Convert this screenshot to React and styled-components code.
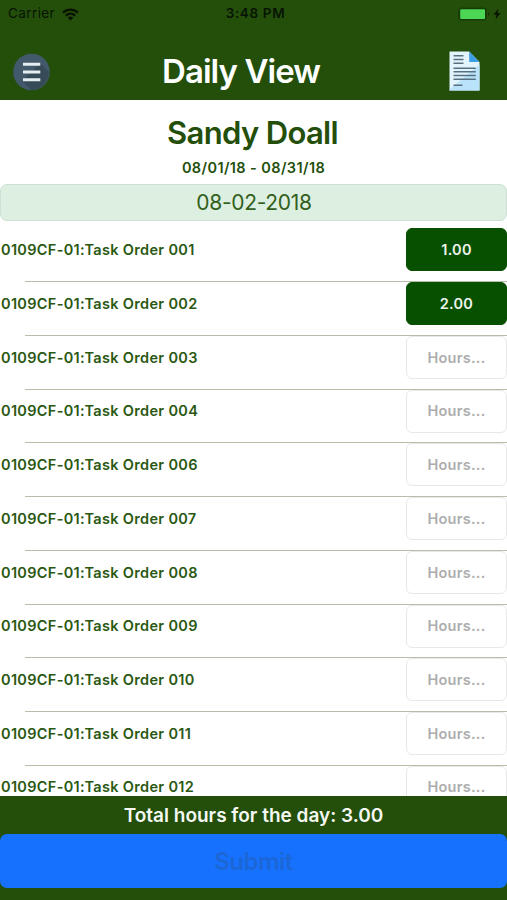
import React from "react";
import styled, { createGlobalStyle } from "styled-components";

const GREEN = "#234f0b";

const Global = createGlobalStyle`
  * { box-sizing: border-box; }
  body { margin: 0; font-family: Inter, "Liberation Sans", sans-serif; background: #fff; }
  button { font: inherit; border: 0; padding: 0; background: none; display: block; }
`;

const Screen = styled.div`
  width: 507px;
  height: 900px;
  overflow: hidden;
  display: flex;
  flex-direction: column;
  background: #fff;
  color: ${GREEN};
`;

const Text = styled.span`
  font-size: ${(p) => p.$size}px;
  font-weight: ${(p) => p.$weight || 600};
  letter-spacing: ${(p) => p.$spacing || 0}px;
  line-height: 1;
  white-space: nowrap;
`;

const Header = styled.header`
  flex: none;
  height: 100px;
  background: ${GREEN};
`;

const StatusBar = styled.div`
  height: 28px;
  padding: 0 5px 0 8px;
  display: grid;
  grid-template-columns: 1fr auto 1fr;
  align-items: center;
  color: #081302;
`;

const Carrier = styled.div`
  display: flex;
  align-items: center;
  gap: 7px;
`;

const Clock = styled.div`
  display: flex;
  padding-left: 1px;
`;

const Power = styled.div`
  display: flex;
  align-items: center;
  justify-content: flex-end;
  margin-right: 1px;
  padding-bottom: 1px;
`;

const NavBar = styled.div`
  height: 72px;
  padding: 16px 27px 0 13px;
  display: grid;
  grid-template-columns: 1fr auto 1fr;
  align-items: center;
  color: #fff;
`;

const Title = styled.h1`
  margin: 0 11px 2px 0;
  display: flex;
`;

const IconButton = styled.button`
  justify-self: ${(p) => p.$side};
  margin-bottom: ${(p) => (p.$side === "end" ? 2 : 0)}px;
  svg { display: block; }
`;

const Employee = styled.section`
  flex: none;
  height: 84px;
  padding-top: 17px;
  display: flex;
  flex-direction: column;
  align-items: center;
  gap: 13px;
`;

const EmployeeName = styled.div`
  display: flex;
  padding-right: 2px;
`;

const DateField = styled.div`
  flex: none;
  height: 37px;
  border: 1px solid #cfdfd3;
  border-radius: 7px;
  background: #dcefe0;
  display: flex;
  align-items: center;
  justify-content: center;
  padding-left: 1px;
  color: #33601c;
`;

const TaskList = styled.ul`
  flex: 1;
  min-height: 0;
  margin: 0;
  padding: 7.4px 0 0;
  overflow: hidden;
  list-style: none;
`;

const TaskRow = styled.li`
  height: 53.74px;
  display: grid;
  grid-template-columns: 1fr 101px;
  grid-template-rows: 43px 1fr;
  align-items: center;
  padding-left: 1px;
  color: #2a5812;
`;

const TaskName = styled.div`
  display: flex;
  padding-top: 1px;
`;

const Divider = styled.div`
  grid-column: 1 / -1;
  align-self: end;
  height: 1px;
  margin-left: 24px;
  background: #b9bda9;
`;

const HoursField = styled.div`
  height: 43px;
  padding-top: 1px;
  border-radius: 6px;
  border: 1px solid ${(p) => (p.$filled ? "#075000" : "#e8e8e8")};
  background: ${(p) => (p.$filled ? "#075000" : "#fff")};
  color: ${(p) => (p.$filled ? "#eef5ec" : "#adadad")};
  display: flex;
  align-items: center;
  justify-content: center;
`;

const Footer = styled.footer`
  flex: none;
  height: 104px;
  background: ${GREEN};
  color: #f5f8f3;
`;

const Total = styled.div`
  height: 38px;
  display: flex;
  align-items: center;
  justify-content: center;
`;

const SubmitButton = styled.button`
  && { display: flex; padding-top: 2px; }
  width: 100%;
  height: 54px;
  border-radius: 7px;
  background: #1771ff;
  color: #1c67d6;
  align-items: center;
  justify-content: center;
`;

function WifiIcon() {
  return (
    <svg width="17" height="13" viewBox="0 0 17 13" fill="none" stroke="currentColor" strokeWidth="2.3">
      <path d="M1 4.7a10.7 10.7 0 0 1 15 0" />
      <path d="M3.8 7.6a6.7 6.7 0 0 1 9.4 0" />
      <path d="M8.5 12.6 5.7 9.8a4 4 0 0 1 5.6 0Z" fill="currentColor" stroke="none" />
    </svg>
  );
}

function BatteryIcon() {
  return (
    <svg width="35" height="14" viewBox="0 0 35 14">
      <rect x=".8" y="1" width="27.6" height="12" rx="2.6" fill="#173806" stroke="#193e07" />
      <rect x="2.2" y="2.2" width="24.8" height="9.8" rx="1" fill="#4bd655" />
      <path d="M30 4.8c1.4.6 1.4 3.8 0 4.4Z" fill="#122c04" />
    </svg>
  );
}

function BoltIcon() {
  return (
    <svg width="8" height="12" viewBox="0 0 8 12">
      <path d="M5.3.5.5 6.7h3L2.5 11.5 7.6 5.1H4.5Z" fill="currentColor" />
    </svg>
  );
}

function MenuIcon() {
  return (
    <svg width="37" height="38" viewBox="0 0 37 38">
      <circle cx="18.5" cy="19" r="18.3" fill="#42586b" />
      <path d="M9.5 28 27 10l8.8 9A17.6 17.6 0 0 1 18.5 37Z" fill="#364b57" />
      <path d="M10 11.2h17.3M10 19h17.3M10 26.8h17.3" stroke="#e4edf0" strokeWidth="3.1" />
    </svg>
  );
}

function DocumentIcon() {
  return (
    <svg width="31" height="40" viewBox="0 0 31 40">
      <path d="M.5.5h19.7L30.5 11v28.5H.5Z" fill="#e2f4fd" />
      <path d="M30.5 13.5v26H.5v-1Z" fill="#b9e3fa" />
      <path d="M20.2.5 30.5 11H20.2Z" fill="#3c9ee5" />
      <path
        d="M4.5 4.8h10M4.5 8.6h10M4.5 12.2h10M4.5 17.2h22.3M4.5 20.8h22.3M4.5 24.6h22.3M4.5 28.2h22.3M4.5 34.2h9"
        stroke="#587181"
        strokeWidth="1.5"
      />
    </svg>
  );
}

const tasks = [
  ["001", "1.00"],
  ["002", "2.00"],
  ["003"],
  ["004"],
  ["006"],
  ["007"],
  ["008"],
  ["009"],
  ["010"],
  ["011"],
  ["012"],
];

function Task({ code, hours }) {
  return (
    <TaskRow>
      <TaskName><Text $size={14.5} $spacing={0.32}>0109CF-01:Task Order {code}</Text></TaskName>
      <HoursField $filled={Boolean(hours)}>
        <Text $size={14.5} $spacing={0.25}>{hours || "Hours..."}</Text>
      </HoursField>
      <Divider />
    </TaskRow>
  );
}

export default function App() {
  return (
    <Screen>
      <Global />
      <Header>
        <StatusBar>
          <Carrier>
            <Text $size={13.5} $weight={400} $spacing={0.4}>Carrier</Text>
            <WifiIcon />
          </Carrier>
          <Clock><Text $size={13.5} $spacing={0.65}>3:48 PM</Text></Clock>
          <Power>
            <BatteryIcon />
            <BoltIcon />
          </Power>
        </StatusBar>
        <NavBar>
          <IconButton $side="start" aria-label="Menu"><MenuIcon /></IconButton>
          <Title><Text $size={33} $weight={600} $spacing={-0.95}>Daily View</Text></Title>
          <IconButton $side="end" aria-label="Timesheet"><DocumentIcon /></IconButton>
        </NavBar>
      </Header>
      <Employee>
        <EmployeeName><Text $size={31} $spacing={-0.65}>Sandy Doall</Text></EmployeeName>
        <Text $size={14.5} $spacing={0.4}>08/01/18 - 08/31/18</Text>
      </Employee>
      <DateField><Text $size={21} $weight={400} $spacing={-0.3}>08-02-2018</Text></DateField>
      <TaskList>
        {tasks.map(([code, hours]) => <Task key={code} code={code} hours={hours} />)}
      </TaskList>
      <Footer>
        <Total><Text $size={19}>Total hours for the day: 3.00</Text></Total>
        <SubmitButton><Text $size={24} $spacing={-0.5}>Submit</Text></SubmitButton>
      </Footer>
    </Screen>
  );
}
